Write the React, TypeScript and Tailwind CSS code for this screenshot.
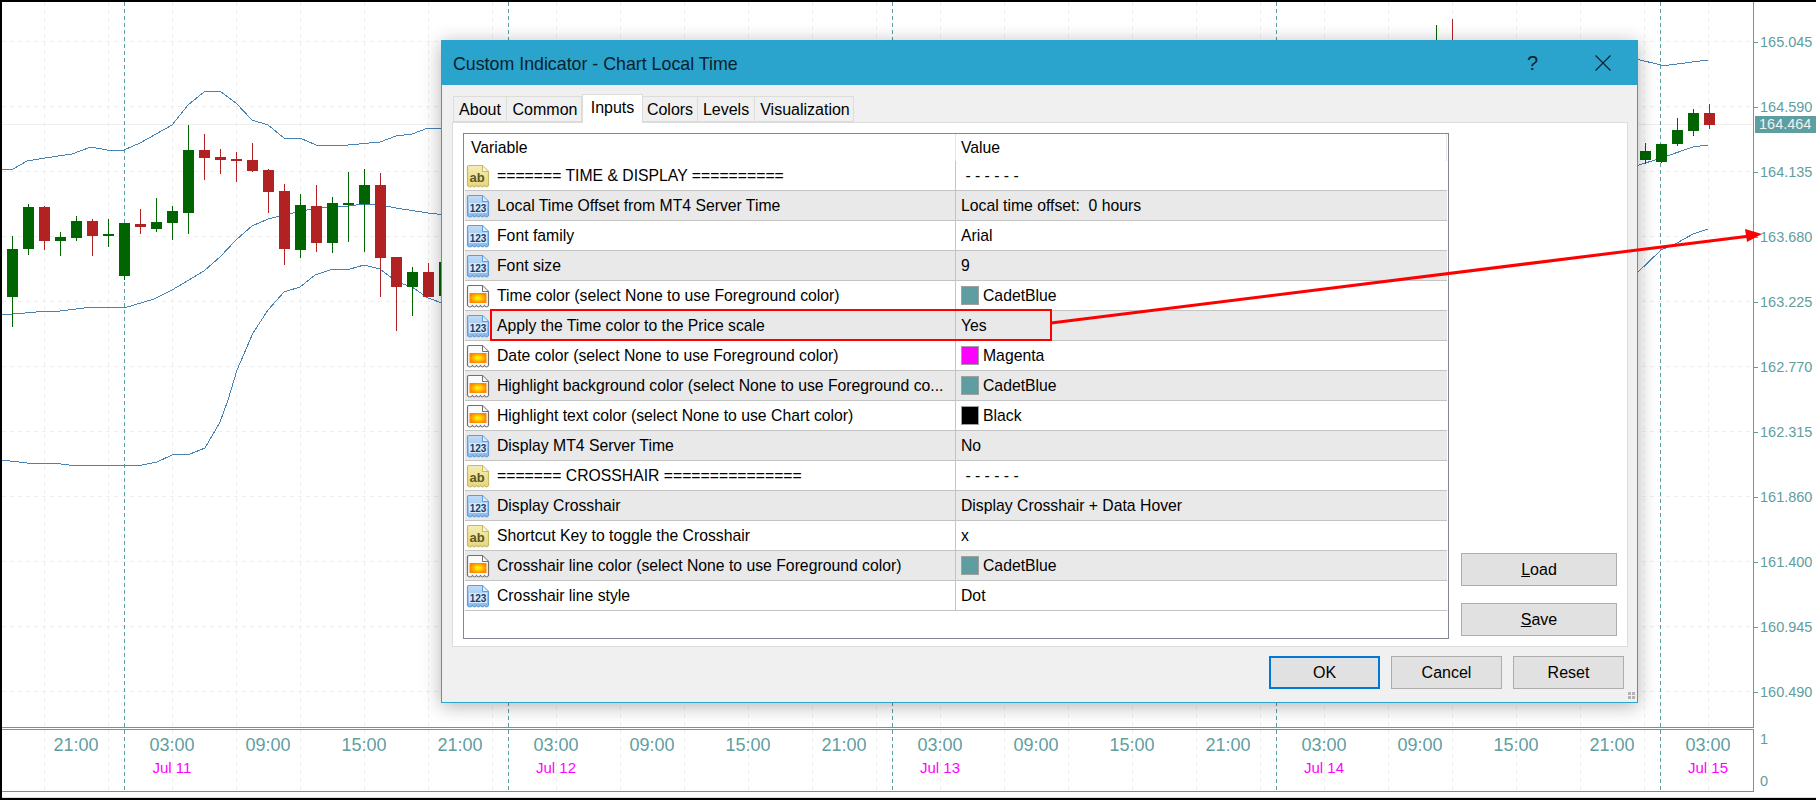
import React from "react";

type Candle = [number, "G" | "R", number, number, number, number];

// x, colour, body top, body bottom, wick top, wick bottom (page pixels)
const candles: Candle[] = [
  [12, "G", 249, 297, 236, 327],
  [28, "G", 207, 249, 204, 255],
  [44, "R", 207, 241, 206, 250],
  [60, "G", 237, 241, 232, 256],
  [76, "G", 221, 238, 216, 241],
  [92, "R", 221, 236, 219, 256],
  [108, "G", 234, 236, 219, 247],
  [124, "G", 223, 276, 223, 280],
  [140, "R", 224, 227, 209, 234],
  [156, "G", 222, 229, 198, 232],
  [172, "G", 211, 223, 206, 240],
  [188, "G", 150, 213, 125, 234],
  [204, "R", 150, 158, 134, 180],
  [220, "R", 157, 160, 149, 174],
  [236, "R", 159, 161, 152, 182],
  [252, "R", 160, 171, 143, 172],
  [268, "R", 170, 192, 169, 213],
  [284, "R", 191, 249, 184, 265],
  [300, "G", 205, 250, 194, 258],
  [316, "R", 206, 243, 185, 252],
  [332, "G", 203, 243, 197, 253],
  [348, "G", 203, 205, 172, 242],
  [364, "G", 185, 204, 169, 252],
  [380, "R", 185, 258, 173, 297],
  [396, "R", 257, 287, 257, 331],
  [412, "G", 272, 287, 267, 316],
  [428, "R", 272, 297, 263, 297],
  [444, "G", 262, 296, 262, 296],
  [1645, "G", 151, 160, 143, 164],
  [1661, "G", 144, 162, 144, 163],
  [1677, "G", 130, 144, 118, 146],
  [1693, "G", 113, 131, 109, 136],
  [1709, "R", 113, 125, 104, 129],
];

const bands = [
  "2,170 13,169 27,161 45,158 72,154 91,147 107,150 124,150 140,143 172,125 188,105 204,92 220,91 236,103 252,120 268,125 284,138 300,138 316,145 348,145 380,142 396,136 412,134 428,128 445,128",
  "2,315 36,312 60,311 84,308 116,307 124,308 154,299 172,290 204,271 220,257 236,240 252,226 268,219 284,215 316,208 348,206 364,204 380,205 396,208 428,213 445,215",
  "2,460 27,463 52,463 69,465 85,466 100,465 142,465 157,462 172,455 190,454 205,448 220,422 228,400 237,370 253,333 268,310 284,292 300,287 315,275 333,269 350,269 364,265 380,269 397,282 412,287 428,298 445,304",
  "1636,59 1661,65 1669,65 1708,60",
  "1636,166 1661,158 1693,147 1708,145",
  "1636,274 1661,250 1677,243 1693,234 1708,229",
];

const gridX = Array.from({ length: 27 }, (_, i) => 44.5 + i * 64);
const gridY = Array.from({ length: 11 }, (_, i) => 41.5 + i * 65);
const sepX = [124.5, 508.5, 892.5, 1276.5, 1660.5];

const prices = ["165.045", "164.590", "164.135", "163.680", "163.225", "162.770", "162.315", "161.860", "161.400", "160.945", "160.490"];

const times: [string, string][] = [
  ["21:00", ""], ["03:00", "Jul 11"], ["09:00", ""], ["15:00", ""], ["21:00", ""], ["03:00", "Jul 12"],
  ["09:00", ""], ["15:00", ""], ["21:00", ""], ["03:00", "Jul 13"], ["09:00", ""], ["15:00", ""],
  ["21:00", ""], ["03:00", "Jul 14"], ["09:00", ""], ["15:00", ""], ["21:00", ""], ["03:00", "Jul 15"],
];

type Row = { icon: "ab" | "123" | "color"; name: string; value: string; swatch?: string };

const rows: Row[] = [
  { icon: "ab", name: "======= TIME & DISPLAY ==========", value: " - - - - - -" },
  { icon: "123", name: "Local Time Offset from MT4 Server Time", value: "Local time offset:  0 hours" },
  { icon: "123", name: "Font family", value: "Arial" },
  { icon: "123", name: "Font size", value: "9" },
  { icon: "color", name: "Time color (select None to use Foreground color)", value: "CadetBlue", swatch: "#5f9ea0" },
  { icon: "123", name: "Apply the Time color to the Price scale", value: "Yes" },
  { icon: "color", name: "Date color (select None to use Foreground color)", value: "Magenta", swatch: "#ff00ff" },
  { icon: "color", name: "Highlight background color (select None to use Foreground co...", value: "CadetBlue", swatch: "#5f9ea0" },
  { icon: "color", name: "Highlight text color (select None to use Chart color)", value: "Black", swatch: "#000000" },
  { icon: "123", name: "Display MT4 Server Time", value: "No" },
  { icon: "ab", name: "======= CROSSHAIR ===============", value: " - - - - - -" },
  { icon: "123", name: "Display Crosshair", value: "Display Crosshair + Data Hover" },
  { icon: "ab", name: "Shortcut Key to toggle the Crosshair", value: "x" },
  { icon: "color", name: "Crosshair line color (select None to use Foreground color)", value: "CadetBlue", swatch: "#5f9ea0" },
  { icon: "123", name: "Crosshair line style", value: "Dot" },
];

const tabs = [
  { label: "About", cls: "w-[54px]" },
  { label: "Common", cls: "w-[75px] pl-[2px]" },
  { label: "Inputs", cls: "w-[61px]" },
  { label: "Colors", cls: "w-[55px]" },
  { label: "Levels", cls: "w-[57px]" },
  { label: "Visualization", cls: "w-[99px] pl-[2px]" },
];

const pagePath = "M3 1.5H16.5L22.5 7.5V21.5C21 23.5 20 23.5 18.5 21.5C17 23.5 16 23.5 14.5 21.5C13 23.5 12 23.5 10.5 21.5C9 23.5 8 23.5 6.5 21.5C5 23.5 3 23.5 1.5 21.5V3Q1.5 1.5 3 1.5Z";

function RowIcon({ kind }: { kind: Row["icon"] }) {
  const line = kind === "ab" ? "#c9b95f" : kind === "123" ? "#5d9fdc" : "#707070";
  const fill = kind === "ab" ? "url(#icon-ab)" : kind === "123" ? "url(#icon-num)" : "#fbfbfb";
  return (
    <svg width="24" height="24" viewBox="0 0 24 24" className="shrink-0">
      <defs>
        <linearGradient id="icon-ab" x1="0" y1="0" x2="0" y2="1">
          <stop offset="0" stopColor="#f5eeb4" />
          <stop offset="1" stopColor="#e6d77e" />
        </linearGradient>
        <linearGradient id="icon-num" x1="0" y1="0" x2="0" y2="1">
          <stop offset="0" stopColor="#c3dcf6" />
          <stop offset="1" stopColor="#86b9ec" />
        </linearGradient>
        <radialGradient id="icon-heat">
          <stop offset="0.2" stopColor="#ffee00" />
          <stop offset="1" stopColor="#ff8400" />
        </radialGradient>
      </defs>
      <path d={pagePath} fill={fill} stroke={line} strokeWidth="1.2" />
      <path d="M16.5 1.5V7.5H22.5" fill="#ffffff" fillOpacity="0.6" stroke={line} strokeWidth="1" />
      {kind === "color" && <rect x="3.5" y="9" width="17" height="10" fill="url(#icon-heat)" />}
      {kind === "123" && (
        <>
          <rect x="3" y="9" width="18" height="10" fill="#d6e8fa" />
          <text x="12" y="17.5" textAnchor="middle" fontSize="10" fontWeight="700" fill="#17406d" fontFamily="'Liberation Sans', sans-serif">123</text>
        </>
      )}
      {kind === "ab" && (
        <text x="11" y="17.5" textAnchor="middle" fontSize="13" fontWeight="700" fill="#5f5620" fontFamily="'Liberation Sans', sans-serif">ab</text>
      )}
    </svg>
  );
}

function ChartLines() {
  return (
    <svg width="1751" height="725" viewBox="2 2 1751 725" className="block">
      {gridY.map((y) => (
        <line key={y} x1="2" x2="1753" y1={y} y2={y} stroke="#eeeeee" strokeDasharray="4 4" shapeRendering="crispEdges" />
      ))}
      {gridX.map((x) => (
        <line key={x} x1={x} x2={x} y1="2" y2="727" stroke="#eeeeee" strokeDasharray="4 4" shapeRendering="crispEdges" />
      ))}
      <line x1="2" x2="1753" y1="124.5" y2="124.5" stroke="#eeeeee" shapeRendering="crispEdges" />
      {sepX.map((x) => (
        <line key={x} x1={x} x2={x} y1="2" y2="727" stroke="#5f9ea0" strokeDasharray="4 3" shapeRendering="crispEdges" />
      ))}
      {bands.map((p) => (
        <polyline key={p} points={p} fill="none" stroke="#4682b4" strokeWidth="1" shapeRendering="crispEdges" />
      ))}
      {candles.map(([x, c, t, b, wt, wb]) => {
        const col = c === "G" ? "#006400" : "#b22222";
        return (
          <g key={x} fill={col} shapeRendering="crispEdges">
            <rect x={x} y={wt} width="1" height={wb - wt} />
            <rect x={x - 5} y={t} width="11" height={b - t} />
          </g>
        );
      })}
      <rect x="1436" y="25" width="1" height="15" fill="#006400" />
      <rect x="1452" y="19" width="1" height="21" fill="#b22222" />
    </svg>
  );
}

function TimeLines() {
  return (
    <svg width="1751" height="61" viewBox="2 730 1751 61" className="absolute left-0 top-0">
      {gridX.map((x) => (
        <line key={x} x1={x} x2={x} y1="730" y2="791" stroke="#eeeeee" strokeDasharray="4 4" shapeRendering="crispEdges" />
      ))}
      {sepX.map((x) => (
        <line key={x} x1={x} x2={x} y1="730" y2="791" stroke="#5f9ea0" strokeDasharray="4 3" shapeRendering="crispEdges" />
      ))}
    </svg>
  );
}

function DialogButton({ children, primary }: { children: React.ReactNode; primary?: boolean }) {
  return (
    <button
      className={
        primary
          ? "h-[33px] w-[111px] border-2 border-[#0078d7] bg-[#e1e1e1] text-[16px] text-black"
          : "h-[33px] w-[111px] border border-[#adadad] bg-[#e1e1e1] text-[16px] text-black"
      }
    >
      {children}
    </button>
  );
}

function Dialog() {
  return (
    <div className="absolute left-[441px] top-[40px] flex h-[663px] w-[1197px] flex-col border border-t-0 border-[#2aa3cd] bg-[#f0f0f0] text-black shadow-[0_3px_18px_rgba(0,0,0,0.3)]">
      <div className="flex h-[45px] shrink-0 items-center bg-[#2aa3cd] pl-[11px] text-[17.8px] text-[#0a1f2c]">
        <span className="mt-[3px] flex-1">Custom Indicator - Chart Local Time</span>
        <span className="mr-[56px] text-[20px]">?</span>
        <svg width="18" height="18" viewBox="0 0 18 18" className="mr-[25px]">
          <path d="M1.5 1.5L16.5 16.5M16.5 1.5L1.5 16.5" stroke="#0a1f2c" strokeWidth="1.1" fill="none" />
        </svg>
      </div>

      <div className="flex h-[37px] shrink-0 items-end pl-[11px]">
        {tabs.map((t) =>
          t.label === "Inputs" ? (
            <div key={t.label} className={`${t.cls} relative z-10 -mb-px flex h-[29px] items-start justify-center border border-b-0 border-[#dcdcdc] bg-white pt-px text-[16px]`}>
              {t.label}
            </div>
          ) : (
            <div key={t.label} className={`${t.cls} flex h-[26px] items-center justify-center border border-l-0 border-[#dcdcdc] first:border-l bg-[#f0f0f0] pt-px text-[16px]`}>
              {t.label}
            </div>
          )
        )}
      </div>

      <div className="mx-[10px] flex h-[525px] w-[1176px] shrink-0 border border-[#dcdcdc] bg-white pl-[10px] pt-[10px]">
        <div className="flex h-[506px] w-[986px] shrink-0 flex-col border border-[#828790] px-px">
          <div className="flex h-[27px] shrink-0 text-[15.75px]">
            <div className="flex w-[491px] items-center border-r border-[#e5e5e5] pl-[6px]">Variable</div>
            <div className="flex flex-1 items-center border-r border-[#e5e5e5] pl-[5px]">Value</div>
          </div>
          {rows.map((r, i) => (
            <div
              key={r.name}
              className={
                i % 2 === 1
                  ? "flex h-[30px] shrink-0 items-center border-b border-[#c4c4c4] bg-[#e9e9e9] text-[15.75px]"
                  : "flex h-[30px] shrink-0 items-center border-b border-[#c4c4c4] bg-white text-[15.75px]"
              }
            >
              <div className="flex h-full w-[491px] shrink-0 items-center gap-[7px] border-r border-[#c4c4c4] pl-px">
                <RowIcon kind={r.icon} />
                <span className="whitespace-nowrap">{r.name}</span>
              </div>
              <div className="flex items-center gap-[4px] whitespace-pre pl-[5px]">
                {r.swatch && (
                  <span className="h-[19px] w-[18px] border border-[#a0a0a0] bg-[var(--sw)]" style={{ "--sw": r.swatch } as React.CSSProperties} />
                )}
                <span>{r.value}</span>
              </div>
            </div>
          ))}
        </div>
        <div className="ml-[12px] flex h-[503px] w-[156px] flex-col justify-end gap-[17px]">
          <button className="h-[33px] border border-[#adadad] bg-[#e1e1e1] text-[16px]">
            <span className="underline">L</span>oad
          </button>
          <button className="h-[33px] border border-[#adadad] bg-[#e1e1e1] text-[16px]">
            <span className="underline">S</span>ave
          </button>
        </div>
      </div>

      <div className="flex flex-1 justify-end gap-[11px] pr-[13px] pt-[9px]">
        <DialogButton primary>OK</DialogButton>
        <DialogButton>Cancel</DialogButton>
        <DialogButton>Reset</DialogButton>
      </div>

      <div className="absolute bottom-[3px] right-[2px] grid grid-cols-2 gap-px">
        <span className="h-[3px] w-[3px] bg-[#b4b4b4]" />
        <span className="h-[3px] w-[3px] bg-[#b4b4b4]" />
        <span className="h-[3px] w-[3px] bg-[#b4b4b4]" />
        <span className="h-[3px] w-[3px] bg-[#b4b4b4]" />
      </div>
    </div>
  );
}

function Callout() {
  return (
    <svg width="1816" height="800" viewBox="0 0 1816 800" className="pointer-events-none absolute left-0 top-0">
      <rect x="491" y="310" width="560" height="30" fill="none" stroke="#ff0000" strokeWidth="2" shapeRendering="crispEdges" />
      <line x1="1051" y1="323" x2="1750" y2="236" stroke="#ff0000" strokeWidth="3" />
      <polygon points="1762,234 1745,229 1747,242" fill="#ff0000" />
    </svg>
  );
}

export default function App() {
  return (
    <div className="relative h-[800px] w-[1816px] overflow-hidden bg-black pl-[2px] pt-[2px] font-['Liberation_Sans',Arial,sans-serif]">
      <div className="flex h-[798px] flex-col bg-white">
        <div className="flex h-[725px] shrink-0">
          <div className="h-[725px] w-[1751px] shrink-0">
            <ChartLines />
          </div>
          <div className="relative flex-1 border-l border-[#5f9ea0] pt-[8px] text-[#5f9ea0]">
            {prices.map((p) => (
              <div key={p} className="flex h-[65px] items-center gap-[2px]">
                <span className="h-px w-[4px] bg-[#5f9ea0]" />
                <span className="text-[14.5px]">{p}</span>
              </div>
            ))}
            <div className="absolute left-[1px] top-[114px] flex h-[17px] w-[61px] items-center bg-[#5f9ea0] pl-[4px] text-[14.5px] text-[#eaf3f3]">164.464</div>
          </div>
        </div>

        <div className="h-px w-[1752px] shrink-0 bg-[#5f9ea0]" />
        <div className="h-px shrink-0" />

        <div className="flex h-[63px] shrink-0">
          <div className="relative h-[63px] w-[1752px] shrink-0 border-y border-r border-[#5f9ea0]">
            <TimeLines />
            <div className="relative ml-[26px] grid w-[1728px] grid-cols-[repeat(18,96px)] pt-[3px]">
              {times.map(([t, d], i) => (
                <div key={i} className="flex flex-col items-center">
                  <span className="h-[24px] text-[18px] leading-[24px] text-[#5f9ea0]">{t}</span>
                  <span className="h-[22px] text-[15px] leading-[22px] text-[#ff00ff]">{d}</span>
                </div>
              ))}
            </div>
          </div>
          <div className="flex h-[64px] flex-col justify-between pl-[6px] text-[14.5px] text-[#5f9ea0]">
            <span>1</span>
            <span>0</span>
          </div>
        </div>

        <div className="mt-[5px] h-px shrink-0 bg-[#dddddd]" />
        <div className="h-[2px] shrink-0 bg-black" />
      </div>

      <Dialog />
      <Callout />
    </div>
  );
}
